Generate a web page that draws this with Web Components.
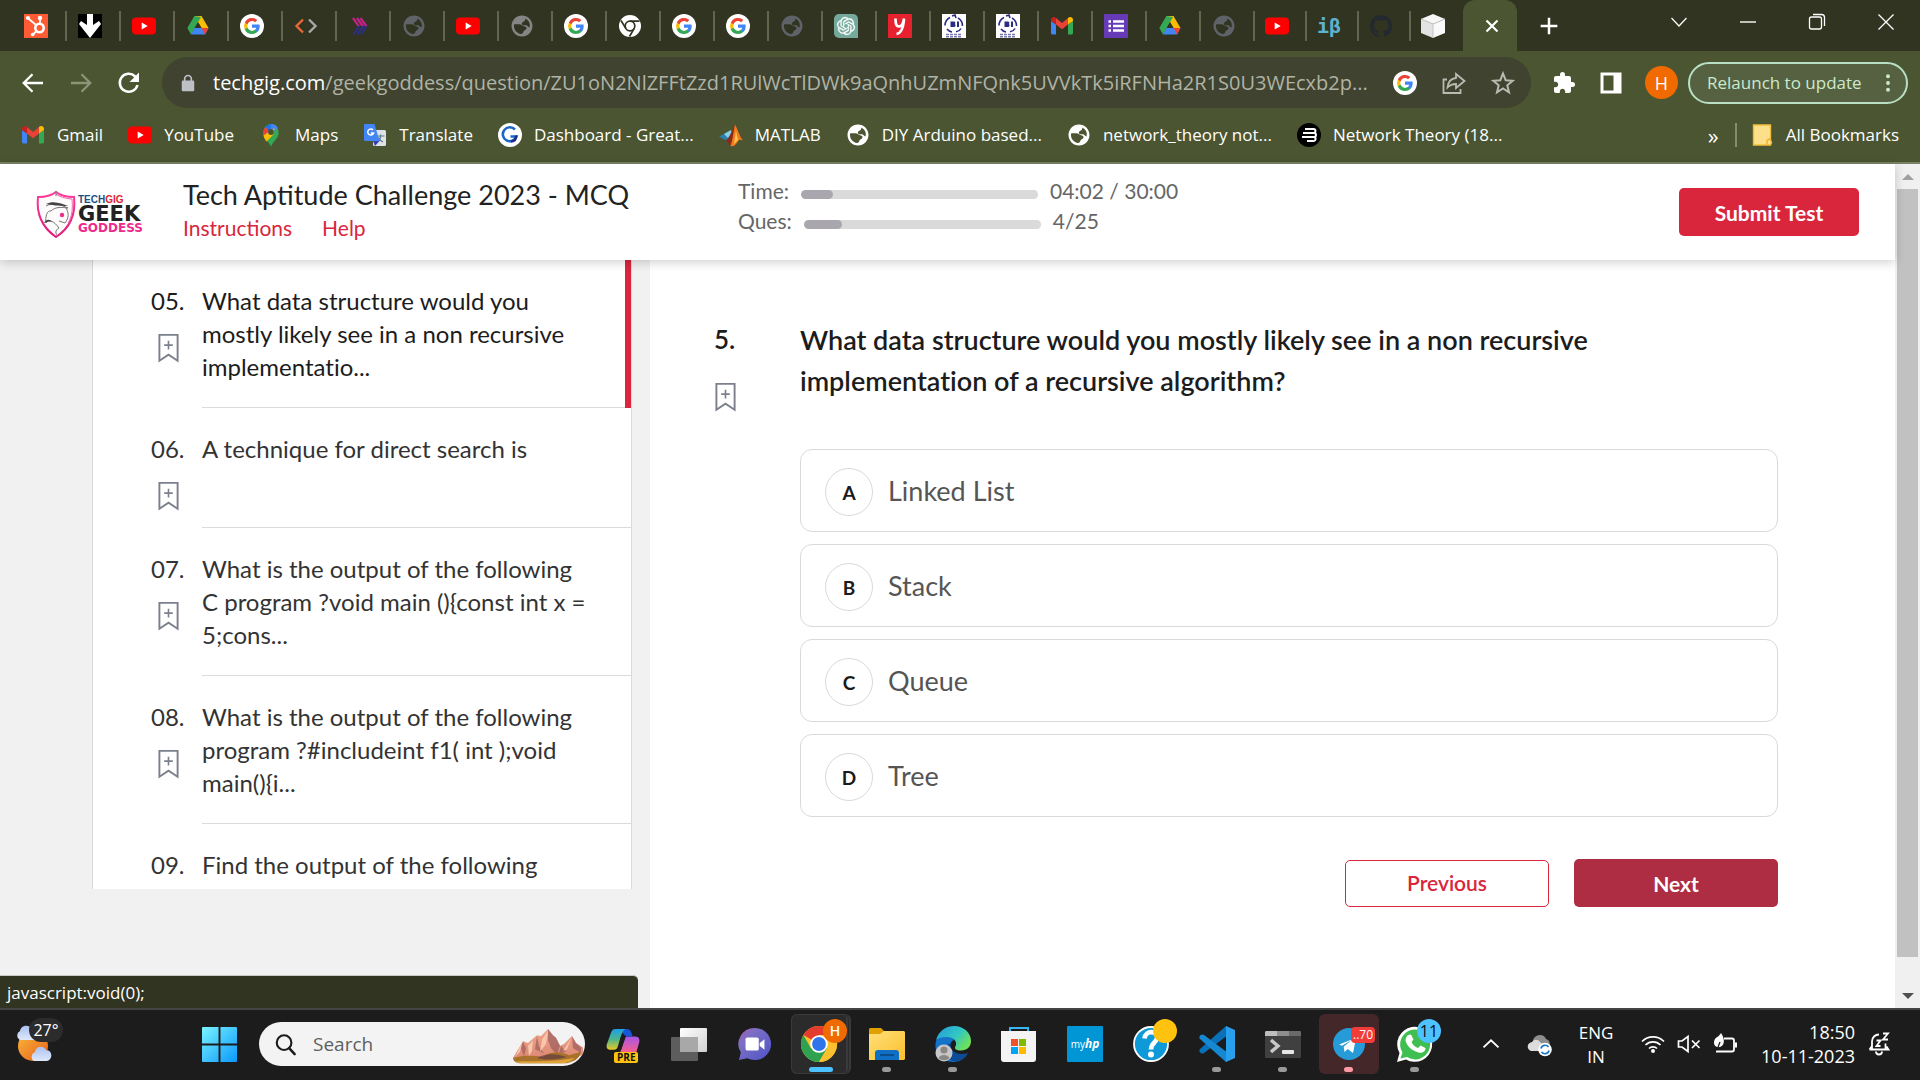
<!DOCTYPE html>
<html lang="en">
<head>
<meta charset="utf-8">
<title>Tech Aptitude Challenge 2023 - MCQ</title>
<style>
  html, body { margin: 0; height: 100%; overflow: hidden; }
  body { font-family: "Open Sans", "Noto Sans", sans-serif; }
</style>
</head>
<body>
<desk-top></desk-top>

<script>
const gLogo = '<path fill="#4285f4" d="M21.6 12.2c0-.7-.1-1.4-.2-2H12v3.9h5.4a4.6 4.6 0 0 1-2 3v2.5h3.2c1.900-1.700 3-4.300 3-7.400z"/><path fill="#34a853" d="M12 22c2.700 0 5-.9 6.600-2.400l-3.200-2.500c-.9.6-2 1-3.400 1-2.600 0-4.800-1.800-5.600-4.100H3.100v2.600A10 10 0 0 0 12 22z"/><path fill="#fbbc05" d="M6.400 14a6 6 0 0 1 0-3.900V7.500H3.100a10 10 0 0 0 0 9z"/><path fill="#ea4335" d="M12 5.900c1.500 0 2.800.5 3.800 1.500l2.900-2.900A10 10 0 0 0 3.100 7.500l3.300 2.600C7.200 7.700 9.400 5.900 12 5.900z"/>';
const globePath = '<path fill="currentColor" d="M12 1.500C6.200 1.500 1.500 6.200 1.500 12S6.200 22.500 12 22.500 22.500 17.800 22.500 12 17.800 1.500 12 1.500zM11 20c-4-.5-7-3.900-7-8 0-.6.1-1.200.2-1.800H9.500c2 0 2.500 1.300 4 1.800 1.800.6 3 .7 3 2.200 0 1.800-2.300 1.600-2.900 3.100-.4 1.100-.9 2.700-2.600 2.700zM19.500 13.500c-1.500-.2-1.700-1.800-3.300-2.200-1.600-.3-3.200.5-4.100-.8-.8-1.300.4-2.500 1.700-3 1.300-.400 1.600-1.500 1.400-2.900 3.300 1.500 5.500 5 4.300 8.900z"/>';
const ytBody = '<rect y="3.500" width="24" height="17" rx="4" fill="#f00"/><path d="M9.700 8.500v7l6-3.500z" fill="#fff"/>';
const driveBody = '<path fill="#1ea362" d="M8.500 2h7L5 20 1.500 14z"/><path fill="#34a853" d="M8.500 2h7l-3.500 6z"/><path fill="#fbbc05" d="M8.500 2h7l7 12h-7z"/><path fill="#34a853" d="M8.500 2L1.500 14 5 20.500 15 3z"/><path fill="#4285f4" d="M8.500 14h14L19 20.500H5z"/><path fill="#ea4335" d="M15.500 14h7L19 20.500z"/><path fill="#303420" d="M12 8.200l-3.400 5.800h6.900z"/>';
const gmailBody = '<path fill="#4285f4" d="M1 7v12c0 .8.6 1.500 1.500 1.500H6V10.500z"/><path fill="#34a853" d="M18 20.500h3.500c.9 0 1.500-.7 1.500-1.500V7l-5 3.500z"/><path fill="#ea4335" d="M6 4l6 5 6-5v6.500l-6 4.800-6-4.800z"/><path fill="#c5221f" d="M1 6c0-2.500 2.900-3.900 5-2v6.500L1 7z"/><path fill="#fbbc04" d="M18 4c2.100-1.900 5-.5 5 2v1l-5 3.500z"/>';

const ICONS = {
  hubspot: '<rect width="24" height="24" fill="#ff5c35"/><g fill="none" stroke="#fff"><circle cx="15.500" cy="14" r="4.200" stroke-width="2.600"/><path d="M16 10V5M12.300 11.200L4 4.200M12.500 17l-3.500 3.500" stroke-width="1.800"/></g><g fill="#fff"><circle cx="16" cy="4" r="2.200"/><circle cx="4" cy="4" r="2.100"/><circle cx="8.700" cy="20.500" r="1.800"/></g>',
  down: '<rect width="24" height="24" fill="#000"/><path d="M9 0h6v11l6-4 2 3-11 14L1 10l2-3 6 4z" fill="#fff"/>',
  youtube: ytBody,
  drive: driveBody,
  google: '<circle cx="12" cy="12" r="12" fill="#fff"/><g transform="translate(2.400 2.400) scale(.8)">' + gLogo + '</g>',
  code: '<g fill="none" stroke-width="2.400"><path d="M9 5.500L2.500 12 9 18.500" stroke="#e8683a"/><path d="M15 5.500l6.500 6.500-6.500 6.500" stroke="#a9a9a9"/></g>',
  stripes: '<g fill="none" stroke-width="2.200"><path d="M5 4l6 8.500M9 4l6 8.500M12.500 4l6 8.500" stroke="#c6218a"/><path d="M11 12l-5.500 8.500M15 12l-5.500 8.500M18.500 12L13 20.500" stroke="#2c2f86"/></g>',
  globe: globePath,
  chrome: '<circle cx="12" cy="12" r="11" fill="#fff"/><g fill="none" stroke="#303420" stroke-width="1.700"><circle cx="12" cy="12" r="4.800"/><path d="M12 7.200h9.500M7.800 14.400L3 6.500M16.200 14.400L11.500 22.500"/></g>',
  gpt: '<path fill="#75a99c" d="M5 0h14a5 5 0 0 1 5 5v19H5a5 5 0 0 1-5-5V5a5 5 0 0 1 5-5z"/><path transform="translate(3 3) scale(.75)" fill="#fff" stroke="#fff" stroke-width=".3" d="M22.2819 9.8211a5.9847 5.9847 0 0 0-.5157-4.9108 6.0462 6.0462 0 0 0-6.5098-2.9A6.0651 6.0651 0 0 0 4.9807 4.1818a5.9847 5.9847 0 0 0-3.9977 2.9 6.0462 6.0462 0 0 0 .7427 7.0966 5.98 5.98 0 0 0 .511 4.9107 6.051 6.051 0 0 0 6.5146 2.9001A5.9847 5.9847 0 0 0 13.2599 24a6.0557 6.0557 0 0 0 5.7718-4.2058 5.9894 5.9894 0 0 0 3.9977-2.9001 6.0557 6.0557 0 0 0-.7475-7.0729zm-9.022 12.6081a4.4755 4.4755 0 0 1-2.8764-1.0408l.1419-.0804 4.7783-2.7582a.7948.7948 0 0 0 .3927-.6813v-6.7369l2.02 1.1686a.071.071 0 0 1 .038.052v5.5826a4.504 4.504 0 0 1-4.4945 4.4944zm-9.6607-4.1254a4.4708 4.4708 0 0 1-.5346-3.0137l.142.0852 4.783 2.7582a.7712.7712 0 0 0 .7806 0l5.8428-3.3685v2.3324a.0804.0804 0 0 1-.0332.0615L9.74 19.9502a4.4992 4.4992 0 0 1-6.1408-1.6464zM2.3408 7.8956a4.485 4.485 0 0 1 2.3655-1.9728V11.6a.7664.7664 0 0 0 .3879.6765l5.8144 3.3543-2.0201 1.1685a.0757.0757 0 0 1-.071 0l-4.8303-2.7865A4.504 4.504 0 0 1 2.3408 7.872zm16.5963 3.8558L13.1038 8.364 15.1192 7.2a.0757.0757 0 0 1 .071 0l4.8303 2.7913a4.4944 4.4944 0 0 1-.6765 8.1042v-5.6772a.79.79 0 0 0-.407-.667zm2.0107-3.0231l-.142-.0852-4.7735-2.7818a.7759.7759 0 0 0-.7854 0L9.409 9.2297V6.8974a.0662.0662 0 0 1 .0284-.0615l4.8303-2.7866a4.4992 4.4992 0 0 1 6.6802 4.66zM8.3065 12.863l-2.02-1.1638a.0804.0804 0 0 1-.038-.0567V6.0742a4.4992 4.4992 0 0 1 7.3757-3.4537l-.142.0805L8.704 5.459a.7948.7948 0 0 0-.3927.6813zm1.0976-2.3654l2.602-1.4998 2.6069 1.4998v2.9994l-2.5974 1.4997-2.6067-1.4997Z"/>',
  ypage: '<rect width="24" height="24" rx="1" fill="#e8212e"/><path d="M7.500 4.500c0 5 .3 8 3.500 8 3 0 4.300-3 5-8M16 5c-.5 8-2 14-7.500 15" fill="none" stroke="#fff" stroke-width="2.600"/>',
  seal: '<rect width="24" height="24" fill="#fff"/><g fill="none" stroke="#2b2d83" stroke-width="1.600"><path d="M8 3.500a9 9 0 0 0-5 8M16 4a9 9 0 0 1 4.500 8M5 15c1.500 2 3 2.700 5 3M19 14.500c-1 2-3 3-5 3.300M10 2l3-1 1 3"/></g><path fill="#2b2d83" d="M8.500 7.500h3.200c2 0 2 2 1 2.600 1.400.6 1.200 3-1 3H8.500zM15 7.500h2v5.600h-2z"/><path d="M4 20.500h16M4 22.700h16" stroke="#7779b5" stroke-width="1.600" stroke-dasharray="3 1"/>',
  gmail: gmailBody,
  forms: '<rect width="24" height="24" rx="1" fill="#673ab7"/><path d="M9 7.500h11M9 12h11M9 16.500h11" stroke="#fff" stroke-width="2.400"/><path d="M4.500 7.500h2.500M4.500 12h2.500M4.500 16.500h2.500" stroke="#fff" stroke-width="2.400"/>',
  github: '<path fill="#24292f" d="M12 1a11.200 11.200 0 0 0-3.500 21.800c.6.1.8-.2.8-.5v-2.200c-3.100.7-3.800-1.300-3.800-1.300-.5-1.300-1.200-1.700-1.200-1.700-1-.7.1-.7.1-.7 1.100.1 1.700 1.200 1.700 1.200 1 1.700 2.600 1.200 3.300.9.100-.7.400-1.200.7-1.500-2.500-.3-5.100-1.200-5.100-5.500 0-1.200.4-2.200 1.200-3-.1-.3-.5-1.400.1-3 0 0 .9-.3 3.100 1.200a10.600 10.600 0 0 1 5.600 0c2.200-1.500 3.100-1.200 3.100-1.200.6 1.600.2 2.700.1 3 .7.8 1.200 1.800 1.200 3 0 4.300-2.600 5.200-5.100 5.500.4.300.8 1 .8 2.100v3.100c0 .3.200.6.8.5A11.200 11.200 0 0 0 12 1z"/>',
  cube: '<path fill="#f7f7f7" d="M12 0l12 5-12 5L0 5z"/><path fill="#e3e3e3" d="M0 5l12 5v14L0 19z"/><path fill="#fafafa" d="M24 5l-12 5v14l12-5z"/><path d="M0 5l12 5 12-5M12 10v14" fill="none" stroke="#c4c4c4"/>',
  close: '<path d="M6.500 6.500l11 11M17.500 6.500l-11 11" fill="none" stroke="currentColor" stroke-width="2.200"/>',
  plus: '<path d="M12 2v20M2 12h20" fill="none" stroke="currentColor" stroke-width="3"/>',
  chevdown: '<path d="M4.500 8L12 16l7.500-8" fill="none" stroke="currentColor" stroke-width="1.200"/>',
  minimise: '<path d="M4 12h16" stroke="currentColor" stroke-width="1.400"/>',
  restore: '<g fill="none" stroke="currentColor" stroke-width="1.300"><rect x="4.500" y="7" width="12" height="12" rx="2"/><path d="M8 4.500h8.500a3 3 0 0 1 3 3V16"/></g>',
  winclose: '<path d="M4.500 4.500l15 15M19.500 4.500l-15 15" fill="none" stroke="currentColor" stroke-width="1.300"/>',
  back: '<path d="M22 12H3M11.500 3.200L2.700 12l8.800 8.800" fill="none" stroke="currentColor" stroke-width="2.300"/>',
  forward: '<path d="M2 12h19M12.500 3.200L21.300 12l-8.800 8.800" fill="none" stroke="currentColor" stroke-width="2.300"/>',
  reload: '<path d="M20.500 14a9 9 0 1 1-2.300-8.500l2 2" fill="none" stroke="currentColor" stroke-width="2.500"/><path d="M22 1.500V11h-9.500z" fill="currentColor"/>',
  lock: '<rect x="4.500" y="9" width="15" height="13" rx="1.500" fill="currentColor"/><path d="M8 10V7a4 4 0 0 1 8 0V10" fill="none" stroke="currentColor" stroke-width="2"/>',
  share: '<g fill="none" stroke="currentColor" stroke-width="1.800"><path d="M5 8.500H1.500v13.500H18.500v-4"/><path d="M14 3l8.500 7L14 17v-4c-4 0-6.500 1.300-8.500 3.500C6 11 9 7.500 14 7z"/></g>',
  star: '<path d="M12 2.500l2.700 6.700 7 .5-5.400 4.600 1.700 7L12 17.500l-6 3.800 1.700-7L2.300 9.700l7-.5z" fill="none" stroke="currentColor" stroke-width="2"/>',
  puzzle: '<path fill="currentColor" d="M20.500 11H19V7c0-1.100-.9-2-2-2h-4V3.500a2.500 2.500 0 0 0-5 0V5H4c-1.100 0-2 .9-2 2v3.800h1.500c1.500 0 2.700 1.200 2.700 2.700S5 16.200 3.500 16.200H2V20c0 1.100.9 2 2 2h3.800v-1.500c0-1.500 1.200-2.700 2.700-2.700s2.700 1.200 2.700 2.700V22H17c1.100 0 2-.9 2-2v-4h1.500a2.500 2.500 0 0 0 0-5z"/>',
  sidepanel: '<path fill="currentColor" fill-rule="evenodd" d="M1.500 1.500h21v21h-21zM4.500 4.500v15h10v-15z"/>',
  dots: '<g fill="currentColor"><circle cx="12" cy="3" r="2.600"/><circle cx="12" cy="12" r="2.600"/><circle cx="12" cy="21" r="2.600"/></g>',
  maps: '<path fill="#34a853" d="M12 24c-1-4.500-6.500-7-7.500-12C3.500 6 7 1 12 1s8.500 5 7.500 10.500C18.500 16 13 19.500 12 24z"/><path fill="#4285f4" d="M12 1c3 0 5.500 1.500 6.900 4L9 14.500 5 6z"/><path fill="#1a73e8" d="M6.300 4A8 8 0 0 1 12 1l-1 8z"/><path fill="#ea4335" d="M6.300 4l4.200 4-6 5c-.6-3.500 0-6.600 1.800-9z"/><path fill="#fbbc04" d="M4.500 12.500L15.500 5l-1 6.500-7 7c-1.300-1.700-2.600-3.500-3-6z"/><circle cx="12" cy="9" r="2.900" fill="#4b5431"/>',
  translate: '<rect x="10" y="7" width="13" height="16" rx="1.500" fill="#dfe3e8"/><path d="M14 13h7.500M17.700 11.500V13c-.3 3-1.500 4.500-3.500 5.500M15.500 14.500c1 2 2.500 3.500 4.500 4.500" fill="none" stroke="#607d8b" stroke-width="1.200"/><path d="M2 1h9.500l5 17H2.500A1.500 1.500 0 0 1 1 16.500V2a1 1 0 0 1 1-1z" fill="#4285f4"/><path d="M10 18h6.500L12 23z" fill="#3a3fb0"/><path d="M10 7a3 3 0 1 0 .6 3H7.800" fill="none" stroke="#fff" stroke-width="1.500"/>',
  dashg: '<circle cx="12" cy="12" r="12" fill="#fff"/><path d="M17 6.500a7 7 0 1 0 1.500 7h-6" fill="none" stroke="#1967c9" stroke-width="2.600"/><path d="M18 12.500c.3 3-1.500 5.500-5 6" fill="none" stroke="#1d2b8c" stroke-width="2.400"/>',
  matlab: '<path fill="#2c7fb0" d="M0 13.500l8-4 4 3-5 5z"/><path fill="#7fd0e8" d="M5 11l7-4 1 3-4 5z"/><path fill="#8a2c12" d="M7 17.500c4-3 6-11 9-16l1 8-5 13z"/><path fill="#f37a1f" d="M16 1.500c2.500 4 4.500 12 8 16-4-2-5 1-6.500 3S14 24 11.500 23c2-5 3-14 4.500-21.500z"/><path fill="#fcc64a" d="M17 8l2 9-4 4z"/>',
  netth: '<circle cx="12" cy="12" r="12" fill="#000"/><path d="M8 6h8.500a2 2 0 0 1 0 4M6 10h11a2 2 0 0 1 0 4M5 14h12a2 2 0 0 1-1 4M10 18h6" fill="none" stroke="#fff" stroke-width="1.900"/>',
  folder: '<path fill="#ffe08a" stroke="#f1be3b" stroke-width="1.400" d="M3.500 2h17v15l1 2.500-1 2.500h-17z"/><path d="M17 21.500v-4l3.500-2" fill="none" stroke="#eeb52f" stroke-width="1.500"/>',
  mark: '<path d="M2.500 1.300h19v27L12 22l-9.500 6.300z" fill="none" stroke="currentColor" stroke-width="2"/><path d="M12 7.500v9M7.500 12h9" stroke="currentColor" stroke-width="1.700"/>',
  shield: '<defs><linearGradient id="s" x1="0" y1="0" x2="0" y2="1"><stop offset="0" stop-color="#ff3d9a"/><stop offset="1" stop-color="#e2187a"/></linearGradient></defs><path d="M20 2c5 4 11 5 18 5 2 18-4 31-18 40C7 38 0 25 2 7c7 0 13-1 18-5z" fill="#fdfbfc" stroke="url(#s)" stroke-width="2"/><path d="M20 4c4 3 9 4.500 16 5 1 9 0 18-4 24" fill="none" stroke="#f06bb0"/><path d="M20 1v5M10 16c7-4 15-1 22 2-8-1-13-1-17 3-4-1-6 6-5 12 3-4 8-2 13 5-4 2-4 6-1 8M30 18c3 5 3 10-1 15l-6-2" fill="none" stroke="#777" stroke-width="1"/><path d="M10 14c8-4 16 0 22 2-9 0-17-1-22-2zM8 33c2-4 6-4 8-1-3-1-5 0-8 1z" fill="#444"/><circle cx="26" cy="25" r="2.200" fill="#e8308a"/>',
  weather: '<defs><linearGradient id="w" x1="0" y1="0" x2="1" y2="1"><stop offset="0" stop-color="#f9b93a"/><stop offset="1" stop-color="#e8601c"/></linearGradient><linearGradient id="c" x1="0" y1="0" x2="0" y2="1"><stop offset="0" stop-color="#a9c1f0"/><stop offset="1" stop-color="#dfe8fa"/></linearGradient></defs><circle cx="18" cy="21" r="15" fill="url(#w)"/><path d="M5 15a5 5 0 0 1 0-9c1-6 9-7 12-2 6-1 9 8 2 11z" fill="url(#c)"/><path d="M19 36a5 5 0 0 1 1-9c1-6 8-7 11-2 7 0 7 10 1 11z" fill="url(#c)"/>',
  windows: '<defs><linearGradient id="w" x1="0" y1="0" x2="1" y2="1"><stop offset="0" stop-color="#7af3ff"/><stop offset="1" stop-color="#0a98fb"/></linearGradient></defs><path fill="url(#w)" d="M1 0h16v17H0V1a1 1 0 0 1 1-1zM19 0h16a1 1 0 0 1 1 1v16H19zM0 19h17v17H1a1 1 0 0 1-1-1zM19 19h17v16a1 1 0 0 1-1 1H19z"/>',
  search: '<circle cx="11" cy="10.500" r="8" fill="none" stroke="currentColor" stroke-width="2.300"/><path d="M16.500 16.500l6 6.500" stroke="currentColor" stroke-width="2.800" stroke-linecap="round"/>',
  mountain: '<defs><linearGradient id="m" x1="0" y1="0" x2="0" y2="1"><stop offset="0" stop-color="#f0a58a"/><stop offset="1" stop-color="#dd8a76"/></linearGradient></defs><g transform="translate(-2 5) scale(1 .875)"><path fill="url(#m)" d="M2 33L12 14l5 2L26 7l4 1 7-8 5 7 3 3 4 9 4-2 8-9 4 8 7 5v8l-8 4H8z"/><path fill="#8d5357" d="M37 0l5 7 3 3 4 9-3 10-6-7-3-9zM61 8l4 8 5 5v6l-8-5zM12 14l3 8-2 9-3-9zM26 8l2 12 5 8-9-5zM50 19l5 7-7 2z" opacity=".6"/><path fill="#f8c6ac" d="M37 2l-2 15-6 9 2-14zM11 16l-2 10-5 6zM22 13l-1 12-3 6-1-12zM60 11l-4 12-4 2z"/><path fill="#a8722a" d="M2 33c10-3 20-3 30-1 6-7 20-6 26-2l12-4c-1 6-5 11-14 13H8c-4-1-6-3-6-6z"/><path fill="#56324a" d="M26 33c8-6 20-5 30-1-9 3-20 4-30 1z" opacity=".6"/><path fill="#e0a33a" d="M4 37c18-1 36 1 60-4-4 4-8 6-14 6H9z"/></g>',
  copilot: '<defs><linearGradient id="a" x1="0" y1="0" x2="0" y2="1"><stop offset="0" stop-color="#1c9fe8"/><stop offset=".5" stop-color="#4cb58c"/><stop offset="1" stop-color="#e8c927"/></linearGradient><linearGradient id="b" x1="0" y1="0" x2="0" y2="1"><stop offset="0" stop-color="#a855e8"/><stop offset="1" stop-color="#f8608a"/></linearGradient></defs><path fill="url(#b)" d="M21 10h10c4 0 5 3 4 7l-3 10H15z"/><path fill="#1557d6" d="M16 2h6c4 0 5 3 6 8h-6c-3 0-3-4-6-5z"/><path fill="url(#a)" d="M10 2h11c-4 1-5 8-8 17-1 4-2 5-5 5H4c-3 0-4-3-3-6L5 7c1-3 2-5 5-5z"/><path fill="#1c1c1c" d="M16 9l5 0-5 15h-3z"/>',
  taskview: '<defs><linearGradient id="a" x1="0" y1="0" x2="1" y2="1"><stop offset="0" stop-color="#fff"/><stop offset="1" stop-color="#d0d0d0"/></linearGradient></defs><rect x="9" y="2" width="27" height="24" rx="1" fill="url(#a)"/><rect x="0" y="11" width="27" height="24" rx="1" fill="#5d5d5d"/><path d="M9 11h18v15H9z" fill="#a8a8a8"/>',
  chat: '<defs><linearGradient id="a" x1="0" y1="0" x2="1" y2="1"><stop offset="0" stop-color="#a85ab0"/><stop offset=".3" stop-color="#7b6fc4"/><stop offset="1" stop-color="#4f52c8"/></linearGradient></defs><path fill="url(#a)" d="M18 1a17 17 0 1 1-8 32L1 35l2-8A17 17 0 0 1 18 1z"/><rect x="8" y="11" width="14" height="14" rx="2" fill="#fff"/><path fill="#fff" d="M23 17l5-4v11l-5-4z"/>',
  chromecolor: '<circle cx="18" cy="18" r="18" fill="#fbc02d"/><path fill="#e33b2e" d="M18 18L2.400 9A18 18 0 0 1 33.600 9H18z"/><path fill="#2fa24f" d="M2.400 9A18 18 0 0 0 18 36l8-13.500L18 18l-8 4.500z"/><path fill="#fbc02d" d="M33.600 9A18 18 0 0 1 18 36l8-13.500V9z"/><circle cx="18" cy="18" r="8.800" fill="#fff"/><circle cx="18" cy="18" r="6.900" fill="#2f74ea"/>',
  explorer: '<defs><linearGradient id="a" x1="0" y1="0" x2="1" y2="1"><stop offset="0" stop-color="#ffe07a"/><stop offset="1" stop-color="#fbbf2d"/></linearGradient></defs><path fill="#dfa000" d="M1 2h11l4 4v4H0V3z"/><path fill="url(#a)" d="M0 8h11l4-3h20l1 1v27l-1 1H0z"/><path fill="#0f6fc4" d="M9 24h18a3 3 0 0 1 3 3v7H6v-7a3 3 0 0 1 3-3z"/><path d="M11 29h14" stroke="#0b4c8c" stroke-width="2"/>',
  edge: '<defs><linearGradient id="a" x1="0" y1="0" x2="1" y2=".6"><stop offset="0" stop-color="#2299dd"/><stop offset=".6" stop-color="#31c7c4"/><stop offset="1" stop-color="#6fe05a"/></linearGradient></defs><path fill="#1273c9" d="M1 15c3-7 14-8 18-1-4 2-5 6-3 10s8 6 16 4c-4 8-14 10-22 6C2 30-1 22 1 15z"/><path fill="#0d4b96" d="M16 17c-2 8 6 13 17 10-4 8-14 11-20 5-5-6-4-13 3-15z"/><path fill="url(#a)" d="M1 14C4 4 12 0 19 0c10 0 17 7 17 15 0 7-6 11-14 9-3-1-2-3-1-5 1-4-3-8-9-8-5 0-9 1-11 3z"/><circle cx="9" cy="27" r="8.500" fill="#c8c8c8"/><circle cx="9" cy="24" r="3.600" fill="#8b8782"/><path d="M3.500 32a6 5 0 0 1 11 0c-3 3-8 3-11 0z" fill="#8b8782"/>',
  store: '<path d="M9 7V2h18v5" fill="none" stroke="#38b6f2" stroke-width="2"/><path fill="#f4f4f4" d="M0 5h35v28a3 3 0 0 1-3 3H3a3 3 0 0 1-3-3z"/><path fill="#f0502a" d="M10 13h7v7h-7z"/><path fill="#7fba00" d="M18 13h7v7h-7z"/><path fill="#00a4ef" d="M10 21h7v7h-7z"/><path fill="#ffb900" d="M18 21h7v7h-7z"/>',
  help: '<circle cx="18" cy="18" r="17" fill="#0e9ad8" stroke="#fff" stroke-width="1.800"/><path d="M11.500 12.500c1-9 14-8 12.500 0-.8 4-6 4.500-6 11" fill="none" stroke="#fff" stroke-width="4.600"/><circle cx="18" cy="28.500" r="3" fill="#fff"/>',
  vscode: '<path fill="#0a70b8" d="M27 0L1 23c-2 2 1 6 4 4L29 9z"/><path fill="#1688d2" d="M27 36L1 13c-2-2 1-6 4-4l24 18z"/><path fill="#27a0ee" d="M27 0l9 4v28l-9 4z"/>',
  terminal: '<rect x="0" y="0" width="36" height="27" rx="1" fill="#404040"/><path fill="#bdbdbd" d="M0 5V1l1-1h11v5z"/><path fill="#8d8d8d" d="M12 0h12v5H12z"/><path fill="#6a6a6a" d="M24 0h11l1 1v4H24z"/><path d="M6 9l7 6-7 6" fill="none" stroke="#c9c9c9" stroke-width="3.400"/><rect x="17" y="19" width="12" height="4" rx="1" fill="#e6e6e6"/>',
  telegram: '<circle cx="18" cy="18" r="18" fill="#269bd8"/><path fill="#fff" d="M7 18.500L26 11l-3.500 17-6-4.500-3.500 3.500-1-6 9-7.500-11 6.500z"/>',
  whatsapp: '<path fill="#fff" d="M0 36l2.500-9A17.500 17.500 0 1 1 9 33.500z"/><path fill="#3fbf50" d="M3.500 32.500l2-6A15 15 0 1 1 10 31z"/><path fill="#fff" d="M11 9l3-.5 2.500 5-2 2.500c1.500 3 3.500 4.800 6.500 6l2.500-2.500 5 2.500c0 4-4 5.500-7 4.500-7-2-12-7-13-12 0-2 1-4.500 2.500-5.500z"/>',
  caretup: '<path d="M3 16l9-8.500 9 8.500" fill="none" stroke="currentColor" stroke-width="2.200"/>',
  onedrive: '<path fill="#8d8d8d" d="M6 8c2-6 11-7 13-1 5 1 5 9 1 11H10z"/><path fill="#dcdcdc" d="M4 19c-4-1-5-8 1-9 2-3 6-3 8 0l8 7-2 2z"/><circle cx="18" cy="17.500" r="6.800" fill="#fff"/><path d="M14 16.500a4.200 4.200 0 0 1 7.500-1.500M22 18.500a4.200 4.200 0 0 1-7.500 1.500" fill="none" stroke="#1976c8" stroke-width="1.700"/>',
  wifi: '<g fill="none" stroke="currentColor" stroke-width="1.700"><path d="M1 9.500a15.500 15.500 0 0 1 22 0M4.500 13a10.500 10.500 0 0 1 15 0M8 16.500a5.600 5.600 0 0 1 8 0"/></g><circle cx="12" cy="19" r="2" fill="currentColor"/>',
  mute: '<g fill="none" stroke="currentColor" stroke-width="1.700"><path d="M1.500 9H5l6-4.500v15L5 15H1.500z"/><path d="M15 8.500l7.500 7.500M22.500 8.500L15 16"/></g>',
  battery: '<g fill="none" stroke="currentColor" stroke-width="1.800"><path d="M11 6.500h8a2 2 0 0 1 2 2v9a2 2 0 0 1-2 2H3"/></g><path d="M22 10.500h2v5h-2z" fill="currentColor"/><path fill="currentColor" d="M8 1c3 4 5 12-1 14-5 1-7-3-5.500-7C2.500 5 6 5 8 1z"/><path d="M2 19c2-2 4-5 5-9" fill="none" stroke="#1c1c1c" stroke-width="1.200"/>',
  bell: '<path d="M5 17V9.500C5 5.500 8 2.500 12 2.500M18.500 11.500V17M2.500 17.500h19l-2-3M5 14l-2.500 3.500M9 19.500a3 3 0 0 0 6 0" fill="none" stroke="currentColor" stroke-width="1.800"/><path d="M9.500 8.500h4l-4 5.500h4M16 1.500h5l-5 6h5" fill="none" stroke="currentColor" stroke-width="1.800"/>'
};
const BOXES = { mark: '0 0 24 30', shield: '0 0 40 49', weather: '0 0 38 38', windows: '0 0 36 36', mountain: '0 0 72 40', terminal: '0 0 36 27' };
['copilot','taskview','chat','chromecolor','explorer','edge','store','help','vscode','telegram','whatsapp'].forEach(n => BOXES[n] = '0 0 36 36');

/* Defines an element whose shadow root holds the given style and markup. */
function define(name, css, html) {
  customElements.define(name, class extends HTMLElement {
    constructor() {
      super();
      this.attachShadow({ mode: 'open' });
    }
    connectedCallback() {
      const body = typeof html === 'function' ? html(this) : html;
      this.shadowRoot.innerHTML = `<style>*{box-sizing:border-box}button{font:inherit;color:inherit;background:none;border:0;padding:0;margin:0}a{color:inherit;text-decoration:none}${css}</style>${body}`;
    }
  });
}

define('ui-icon', ':host{display:inline-flex;flex:none}svg{display:block;overflow:visible}', el => {
  const name = el.getAttribute('name');
  const w = el.getAttribute('w') || 24, h = el.getAttribute('h') || w;
  return `<svg width="${w}" height="${h}" viewBox="${BOXES[name] || '0 0 24 24'}" aria-hidden="true">${ICONS[name]}</svg>`;
});

define('browser-tab', `
  :host{display:flex;align-items:center;flex:none;width:54px;height:30px;border-right:2px solid #62654f;padding-left:11px;box-sizing:border-box}
  :host([narrow]){width:52px;padding-left:10px}
  :host([last]){border-color:transparent}
  button{display:flex;color:inherit}`, '<button aria-label="Tab"><slot></slot></button>');

define('tab-strip', `
  :host{display:flex;height:51px;flex:none;background:#303420;color:#fff;padding-left:13px}
  .tabs{display:flex;align-items:center;padding-top:1px}
  .active{display:flex;align-items:center;justify-content:center;width:54px;border-radius:12px 12px 0 0;background:#4b5531;padding-left:4px}
  .new{display:flex;align-items:center;margin-left:22px}
  .win{display:flex;align-items:flex-start;gap:45px;margin-left:auto;padding:10px 22px 0 0}
  .dim{color:#5f6368}.grey{color:#858585}
  .beta{font:700 20px/24px "DejaVu Sans Mono",monospace;color:#5eb1cf;width:24px}
  `, () => {
  const tabs = [['hubspot'],['down'],['youtube'],['drive'],['google'],['code'],['stripes'],['globe','dim'],['youtube'],['globe','grey'],['google'],['chrome'],['google'],['google'],['globe','dim'],['gpt'],['ypage'],['seal'],['seal'],['gmail'],['forms'],['drive'],['globe','dim'],['youtube'],['beta'],['github'],['cube']];
  return `<div class="tabs">${tabs.map(([n, c], i) => `<browser-tab ${i > 22 ? 'narrow' : ''} ${i === 26 ? 'last' : ''}>${n === 'beta' ? '<span class="beta">iβ</span>' : `<ui-icon name="${n}" class="${c || ''}"></ui-icon>`}</browser-tab>`).join('')}</div>
  <button class="active" aria-label="Close tab"><ui-icon name="close"></ui-icon></button>
  <button class="new" aria-label="New tab"><ui-icon name="plus" w="20"></ui-icon></button>
  <div class="win"><button aria-label="Search tabs"><ui-icon name="chevdown"></ui-icon></button><button aria-label="Minimise"><ui-icon name="minimise"></ui-icon></button><button aria-label="Restore"><ui-icon name="restore"></ui-icon></button><button aria-label="Close"><ui-icon name="winclose"></ui-icon></button></div>`;
});

define('tool-bar', `
  :host{display:flex;align-items:center;flex:none;padding:6px 12px 0 21px;background:#4b5531;color:#fff}
  button{display:flex}
  .nav{display:flex;gap:24px;width:141px}
  .off{color:#8e9478}
  .omni{display:flex;align-items:center;flex:1;height:51px;border-radius:26px;background:#3f432f;padding:0 16px 0 16px;font-size:20px;line-height:28px}
  .omni>ui-icon{color:#bdc1c6;margin-right:15px}
  input{flex:1;min-width:0;border:0;padding:0;background:none;font:inherit;color:#b0b3a6;outline:0}
  .acts{display:flex;align-items:center;gap:25px;color:#b9bbb0;margin-left:12px}
  .ext{display:flex;align-items:center;gap:23px;margin:0 11px 0 22px}
  .ext{margin:0 10px 0 21px}
  .who{align-items:center;justify-content:center;width:33px;height:33px;border-radius:50%;background:#f06a00;font-size:18px;margin-left:-1px}
  .update{align-items:center;justify-content:space-between;width:220px;height:42px;border:2px solid #b9dfc4;border-radius:21px;background:#556140;color:#cbe9cf;font-size:17px;padding:0 9px 0 17px}
  `, `<div class="nav"><button aria-label="Back"><ui-icon name="back"></ui-icon></button><button class="off" aria-label="Forward"><ui-icon name="forward"></ui-icon></button><button aria-label="Reload"><ui-icon name="reload"></ui-icon></button></div>
  <div class="omni"><ui-icon name="lock" w="20"></ui-icon><label for="url">techgig.com</label><input id="url" type="text" value="/geekgoddess/question/ZU1oN2NlZFFtZzd1RUlWcTlDWk9aQnhUZmNFQnk5UVVkTk5iRFNHa2R1S0U3WEcxb2p...">
    <div class="acts"><button aria-label="Google"><ui-icon name="google"></ui-icon></button><button aria-label="Share"><ui-icon name="share"></ui-icon></button><button aria-label="Bookmark"><ui-icon name="star"></ui-icon></button></div></div>
  <div class="ext"><button aria-label="Extensions"><ui-icon name="puzzle"></ui-icon></button><button aria-label="Side panel"><ui-icon name="sidepanel"></ui-icon></button><button class="who">H</button></div>
  <button class="update">Relaunch to update <ui-icon name="dots" w="18"></ui-icon></button>`);

define('book-mark', `:host{display:flex;flex:none}a{display:flex;align-items:center;gap:12px;white-space:nowrap}`,
  el => `<a href="#"><ui-icon name="${el.getAttribute('icon')}"></ui-icon><slot></slot></a>`);

define('bookmarks-bar', `
  :host{display:flex;align-items:center;flex:none;height:56px;padding:0 21px;background:#4b5531;border-bottom:2px solid #7c8066;color:#fff;font-size:17px;line-height:24px;box-sizing:border-box}
  .list{display:flex;gap:25px}
  .end{display:flex;align-items:center;margin-left:auto}
  .more{font-size:22px;margin-right:16px}
  .all{border-left:2px solid #858b6f;padding-left:13px}
  `, `<div class="list"><book-mark icon="gmail">Gmail</book-mark><book-mark icon="youtube">YouTube</book-mark><book-mark icon="maps">Maps</book-mark><book-mark icon="translate">Translate</book-mark><book-mark icon="dashg">Dashboard - Great...</book-mark><book-mark icon="matlab">MATLAB</book-mark><book-mark icon="globe">DIY Arduino based...</book-mark><book-mark icon="globe">network_theory not...</book-mark><book-mark icon="netth">Network Theory (18...</book-mark></div>
  <div class="end"><button class="more">»</button><book-mark class="all" icon="folder">All Bookmarks</book-mark></div>`);

define('brand-logo', `
  :host{display:flex;align-items:center;gap:2px;padding-top:4px;font-family:"DejaVu Sans",sans-serif;font-weight:700}
  div{display:grid}
  .a{font:700 10px/12px "Liberation Sans Narrow","Liberation Sans",sans-serif;color:#1d4f86}.a b{color:#e0242f}
  .b{font-size:21px;line-height:16px;color:#222}
  .c{font-size:12px;line-height:12px;color:#ee2a8c}
  `, `<ui-icon name="shield" w="40" h="49"></ui-icon><div><span class="a">TECH<b>GIG</b></span><span class="b">GEEK</span><span class="c">GODDESS</span></div>`);

define('progress-row', `
  :host{display:flex;align-items:center;height:30px;white-space:nowrap}
  progress{appearance:none;width:237px;height:9px;margin:6px 12px 0 12px;border:0;border-radius:5px;overflow:hidden;background:#dadada}
  progress::-webkit-progress-bar{background:#dadada;border-radius:5px}
  progress::-webkit-progress-value{background:#aaa6ad;border-radius:5px}
  `, el => `<label for="p">${el.getAttribute('label')}</label><progress id="p" max="${el.getAttribute('max')}" value="${el.getAttribute('value')}"></progress><slot></slot>`);

define('quiz-header', `
  :host{display:grid;grid-template-columns:147px 555px 1fr auto;align-items:center;height:96px;flex:none;padding:0 36px;background:#fff;box-shadow:0 2px 10px rgba(0,0,0,.2);z-index:1;font:400 21px/32px Lato,sans-serif}
  h1{margin:0;font-weight:400;font-size:27px;line-height:32px;color:#222}
  nav{display:flex;gap:30px;color:#d9263c;line-height:34px}
  .stats{align-self:start;padding-top:12px;color:#666}
  .submit{width:180px;height:48px;border-radius:5px;background:#d9263c;color:#fff;font-weight:700;padding-top:2px}
  `, `<brand-logo></brand-logo>
  <div><h1>Tech Aptitude Challenge 2023 - MCQ</h1><nav><a href="#">Instructions</a><a href="#">Help</a></nav></div>
  <div class="stats"><progress-row label="Time:" max="1800" value="242">04:02 / 30:00</progress-row><progress-row label="Ques:" max="25" value="4">4/25</progress-row></div>
  <button class="submit">Submit Test</button>`);

define('question-item', `
  :host{display:block;padding-left:58px;color:#333}
  :host([active]){color:#1c1c1c;border-right:6px solid #d9263c}
  article{display:grid;grid-template-columns:51px 1fr;align-items:start}
  .no{display:grid;justify-items:start;margin-bottom:-8px}
  .no button{display:flex;color:#7b808c;margin:16px 0 0 6px}
  a{display:block;padding-right:43px;min-height:95px}
  :host([active]) a{padding-right:37px}
  .no,a{padding-top:24px}
  .txt{border-bottom:1px solid #dcdcdc;padding-bottom:24px}
  `, el => `<article><div class="no"><span>${el.getAttribute('no')}.</span><button aria-label="Bookmark question"><ui-icon name="mark" w="23" h="30"></ui-icon></button></div><div class="txt"><a href="#"><slot></slot></a></div></article>`);

define('question-list', `
  :host{display:block;flex:none;width:650px;box-sizing:border-box;padding-left:92px;background:#f1f1f1;font:400 24px/33px Lato,sans-serif;font-variant-ligatures:none}
  .panel{width:540px;height:629px;overflow:hidden;background:#fff;border:solid #dadada;border-width:0 1px}
  `, `<div class="panel"><question-item no="05" active>What data structure would you mostly likely see in a non recursive implementatio...</question-item>
  <question-item no="06">A technique for direct search is</question-item>
  <question-item no="07">What is the output of the following C program ?void main (){const int x = 5;cons...</question-item>
  <question-item no="08">What is the output of the following program ?#includeint f1( int );void main(){i...</question-item>
  <question-item no="09">Find the output of the following</question-item></div>`);

define('answer-option', `
  :host{display:block}
  label{display:flex;align-items:center;height:83px;border:1px solid #d9d9d9;border-radius:12px;padding-left:24px;gap:15px}
  .mark{display:grid;place-items:center;width:48px;height:48px;margin-top:3px}
  .mark>*{grid-area:1/1}
  input{appearance:none;margin:0;width:48px;height:48px;border:1px solid #d9d9d9;border-radius:50%}
  b{font-size:19px;line-height:24px;color:#1a1a1a;padding-top:2px}
  `, el => `<label><span class="mark"><input type="radio" name="answer"><b>${el.getAttribute('letter')}</b></span><slot></slot></label>`);

define('question-view', `
  :host{display:grid;grid-template-columns:86px 1fr;align-content:start;flex:1;padding:59px 117px 0 64px;background:#fff;font:400 27px/41px Lato,sans-serif;font-variant-ligatures:none;color:#555}
  .no{color:#1c1c1c;font-weight:600;font-size:26px}
  .no button{display:flex;color:#7b808c;margin-top:22px}
  h2{margin:0 0 48px;max-width:900px;font-size:27px;font-weight:600;color:#1c1c1c}
  .opts{display:grid;gap:12px}
  .go{display:flex;justify-content:flex-end;align-items:flex-end;gap:25px;margin-top:42px;font-size:21px;line-height:28px}
  .go button{width:204px;height:47px;border:1px solid #d9263c;border-radius:5px;color:#d9263c;font-weight:600;padding-bottom:2px}
  .go .next{height:48px;background:#ae2d42;border:0;color:#fff;font-weight:700;padding:2px 0 0}
  `, `<div class="no">5.<button aria-label="Bookmark question"><ui-icon name="mark" w="23" h="30"></ui-icon></button></div>
  <div><h2>What data structure would you mostly likely see in a non recursive implementation of a recursive algorithm?</h2>
  <div class="opts"><answer-option letter="A">Linked List</answer-option><answer-option letter="B">Stack</answer-option><answer-option letter="C">Queue</answer-option><answer-option letter="D">Tree</answer-option></div>
  <div class="go"><button>Previous</button><button class="next">Next</button></div></div>`);

define('scroll-rail', `
  :host{display:flex;flex-direction:column;align-items:center;flex:none;width:25px;background:#f0f0f0}
  i{width:0;height:0;border:6px solid transparent}
  .up{border-width:0 6px 6px;border-bottom-color:#a0a0a0;margin:10px 0 9px}
  .down{border-width:6px 6px 0;border-top-color:#505050;margin:9px 0}
  .track{display:flex;flex:1;width:21px;padding-bottom:27px}
  .thumb{flex:1;background:#c1c1c1}
  `, '<i class="up"></i><div class="track"><div class="thumb"></div></div><i class="down"></i>');

define('web-page', `
  :host{display:flex;flex:1;min-height:0;position:relative}
  .page{display:flex;flex-direction:column;flex:1}
  .row{display:flex;flex:1}
  .status{position:absolute;left:0;bottom:0;width:638px;height:33px;border-radius:0 5px 0 0;border-top:1px solid #c9cbc4;background:#303420;color:#fff;font-size:17px;line-height:34px;padding-left:7px}
  `, `<div class="page"><quiz-header></quiz-header><div class="row"><question-list></question-list><question-view></question-view></div></div><scroll-rail></scroll-rail><div class="status">javascript:void(0);</div>`);

define('task-app', `
  :host{display:grid;flex:none;width:66px;height:60px;place-items:center;position:relative}
  button{display:grid;place-items:center;width:60px;height:60px;border-radius:6px}
  button>*{grid-area:1/1}
  :host([open])::after{content:"";position:absolute;bottom:2px;left:28px;width:9px;height:5px;border-radius:3px;background:#999}
  :host([current])::after{left:21px;width:24px;background:#4cc2ff}
  :host([alert])::after{background:#ff99a4}
  :host([current]) button{background:#2b2b2b;border:1px solid #3a3a3a;border-right:5px double #3a3a3a}
  :host([alert]) button{background:#442729}
  .badge{position:absolute;top:5px;left:35px;min-width:24px;height:24px;border-radius:12px;text-align:center;font-size:16px;line-height:24px}
  .h{background:#f06a00;color:#fff;font-weight:600;font-size:14px}
  .dot{background:#ffc20e}
  .eleven{background:#4cc2ff;color:#111}
  .seventy{top:13px;left:35px;height:16px;border-radius:4px;background:#f23c38;color:#fff;font-size:12px;line-height:16px}
  .pre{top:38px;left:24px;height:11px;padding:0 3px;border-radius:2px;background:#ffc20e;color:#111;font-weight:700;font-size:10px;line-height:11px}
  .hp{width:36px;height:36px;background:#0096d6;color:#fff;font:italic 700 12px/36px "Open Sans",sans-serif;text-align:center;border-radius:1px}.hp span{font-weight:400;font-style:normal;font-size:10px}
  `, el => {
  const n = el.getAttribute('icon'), c = el.getAttribute('badge'), t = el.getAttribute('text') || '';
  const s = n === 'telegram' ? 32 : n === 'copilot' || n === 'chat' ? 34 : 36;
  return `<button aria-label="${n}">${n === 'hp' ? '<span class="hp"><span>my</span>hp</span>' : `<ui-icon name="${n}" w="${s}" h="${n === 'terminal' ? 27 : s}"></ui-icon>`}</button>${c ? `<span class="badge ${c}">${t}</span>` : ''}`;
});

define('task-bar', `
  :host{display:flex;align-items:center;flex:none;height:72px;box-sizing:border-box;border-top:2px solid #444;background:#1c1c1c;color:#fff;font-size:17px;padding:0 29px 2px 15px}
  button{display:flex}
  .weather{position:relative;width:187px}
  .temp{position:absolute;top:-7px;left:14px;width:34px;height:24px;border-radius:12px;background:#2c2c2c;font-size:16px;line-height:24px;text-align:center}
  .find{display:flex;align-items:center;width:326px;height:44px;margin:0 5px 0 22px;border-radius:22px;background:#f3f3f3;color:#1c1c1c;padding-left:15px;overflow:hidden}
  input{flex:1;min-width:0;border:0;padding:0;margin-left:17px;background:none;font:inherit;font-size:19px;color:#5f5f5f;outline:0}
  input::placeholder{color:#5f5f5f;opacity:1}
  .tray{display:flex;align-items:center;margin-left:auto}
  .lang{text-align:center;line-height:24px;width:60px;font-size:17px;margin:2px 15px 0 15px;display:block}
  .sys{gap:12px}
  .clock{display:block;text-align:right;line-height:24px;font-size:18px;margin:0 12px 0 24px}
  .one{margin-left:26px}
  `, `<button class="weather" aria-label="Weather"><ui-icon name="weather" w="38"></ui-icon><span class="temp">27°</span></button>
  <button aria-label="Start"><ui-icon name="windows" w="35"></ui-icon></button>
  <div class="find"><ui-icon name="search" w="22"></ui-icon><input type="text" placeholder="Search" aria-label="Search"><ui-icon name="mountain" w="72" h="40"></ui-icon></div>
  <task-app icon="copilot" badge="pre" text="PRE"></task-app><task-app icon="taskview"></task-app><task-app icon="chat"></task-app><task-app icon="chromecolor" open current badge="h" text="H"></task-app><task-app icon="explorer" open></task-app><task-app icon="edge" open></task-app><task-app icon="store"></task-app><task-app icon="hp"></task-app><task-app icon="help" badge="dot"></task-app><task-app icon="vscode" open></task-app><task-app icon="terminal" open></task-app><task-app icon="telegram" open alert badge="seventy" text="..70"></task-app><task-app icon="whatsapp" open badge="eleven" text="11"></task-app>
  <div class="tray"><button aria-label="Show hidden icons"><ui-icon name="caretup" w="20"></ui-icon></button><button class="one" aria-label="OneDrive"><ui-icon name="onedrive"></ui-icon></button><button class="lang">ENG<br>IN</button><button class="sys" aria-label="Quick settings"><ui-icon name="wifi"></ui-icon><ui-icon name="mute"></ui-icon><ui-icon name="battery"></ui-icon></button><button class="clock">18:50<br>10-11-2023</button><button aria-label="Notifications"><ui-icon name="bell"></ui-icon></button></div>`);

define('desk-top', ':host{display:flex;flex-direction:column;height:100vh}', '<tab-strip></tab-strip><tool-bar></tool-bar><bookmarks-bar></bookmarks-bar><web-page></web-page><task-bar></task-bar>');
</script>
</body>
</html>
